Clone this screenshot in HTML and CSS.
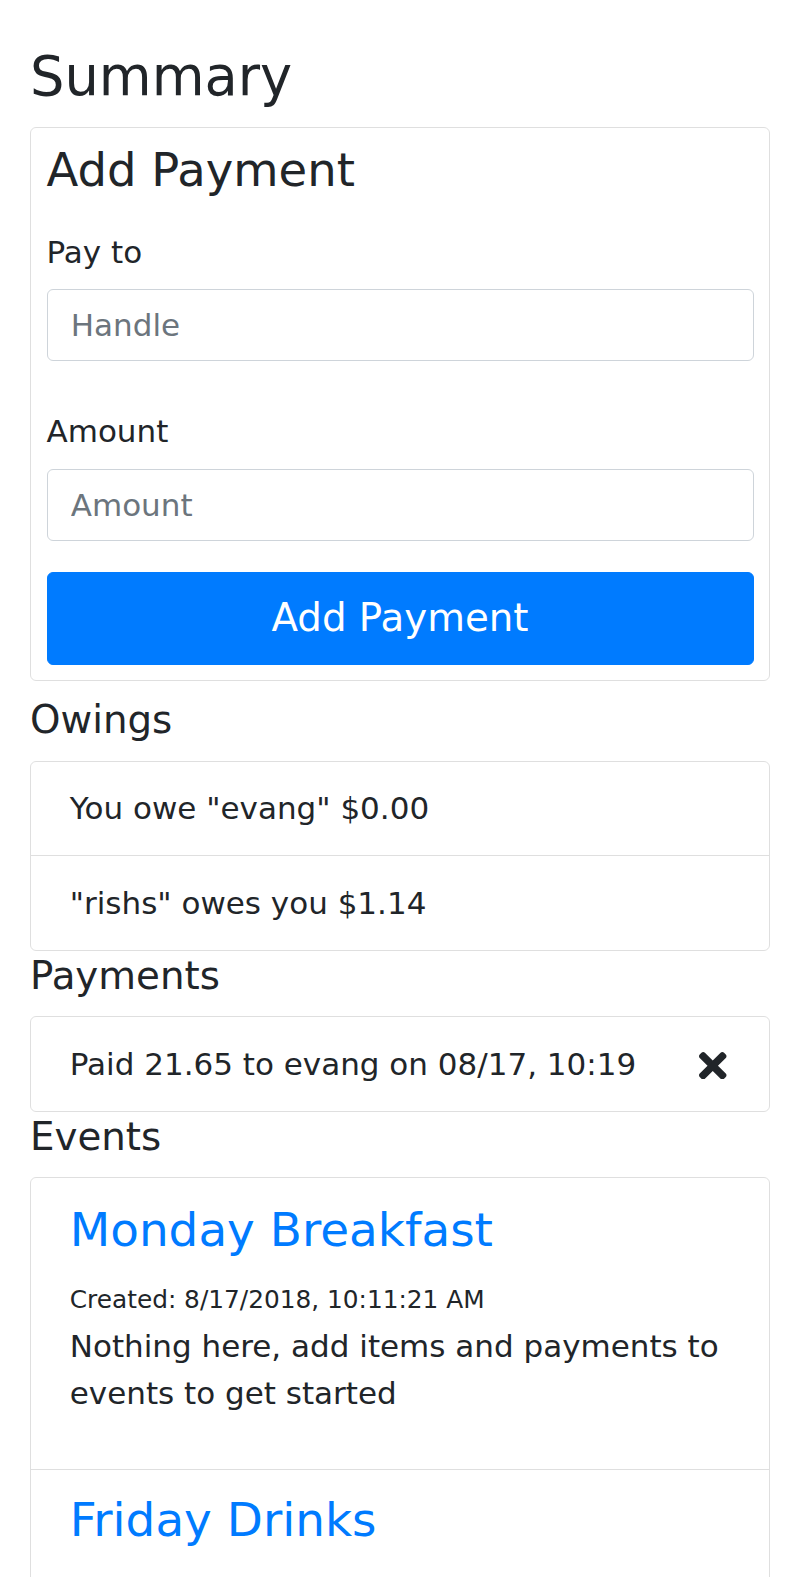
FILE: index.html
```html
<!DOCTYPE html>
<html lang="en">
<head>
<meta charset="utf-8">
<title>Summary</title>
<link rel="stylesheet" href="styles.css">
</head>
<body>
<div class="container">
  <h3 class="page-title">Summary</h3>
  <div class="card">
    <div class="card-body">
      <h4 class="card-title">Add Payment</h4>
      <form class="pay-form">
        <div class="form-group group-first">
          <label class="form-label" for="handle">Pay to</label>
          <input class="form-control" id="handle" type="text" placeholder="Handle">
        </div>
        <div class="form-group group-second">
          <label class="form-label" for="amount">Amount</label>
          <input class="form-control" id="amount" type="text" placeholder="Amount">
        </div>
        <button class="btn-primary" type="button">Add Payment</button>
      </form>
    </div>
  </div>

  <h5 class="section-title">Owings</h5>
  <ul class="list-group">
    <li class="list-group-item">You owe "evang" $0.00</li>
    <li class="list-group-item">"rishs" owes you $1.14</li>
  </ul>

  <h5 class="section-title">Payments</h5>
  <ul class="list-group">
    <li class="list-group-item payment-item">
      <span>Paid 21.65 to evang on 08/17, 10:19</span>
      <svg class="remove-icon" viewBox="0 80 352 352" width="27.5" height="27.5" aria-hidden="true">
        <path fill="#212529" d="M242.72 256l100.07-100.07c12.28-12.28 12.28-32.19 0-44.48l-22.24-22.24c-12.28-12.28-32.19-12.28-44.48 0L176 189.28 75.93 89.21c-12.28-12.28-32.19-12.28-44.48 0L9.21 111.45c-12.28 12.28-12.28 32.19 0 44.48L109.28 256 9.21 356.07c-12.28 12.28-12.28 32.19 0 44.48l22.24 22.24c12.28 12.28 32.2 12.28 44.48 0L176 322.72l100.07 100.07c12.28 12.28 32.2 12.28 44.48 0l22.24-22.24c12.28-12.28 12.28-32.19 0-44.48L242.72 256z"/>
      </svg>
    </li>
  </ul>

  <h5 class="section-title">Events</h5>
  <ul class="list-group events">
    <li class="list-group-item event-item">
      <h4 class="event-title"><a href="#">Monday Breakfast</a></h4>
      <div class="event-meta"><small>Created: 8/17/2018, 10:11:21 AM</small></div>
      <p class="event-text">Nothing here, add items and payments to events to get started</p>
    </li>
    <li class="list-group-item event-item">
      <h4 class="event-title"><a href="#">Friday Drinks</a></h4>
      <div class="event-meta"><small>Created: 8/17/2018, 10:12:04 AM</small></div>
      <p class="event-text">Nothing here, add items and payments to events to get started</p>
    </li>
  </ul>
</div>
</body>
</html>
```

FILE: styles.css
```css
html, body {
  margin: 0;
  padding: 0;
  background: #fff;
}

body {
  font-family: "DejaVu Sans", "Noto Sans", sans-serif;
  font-size: 31px;
  line-height: 46.5px;
  color: #212529;
}

.container {
  padding: 43.7px 30px 0;
}

.page-title {
  font-size: 54.25px;
  font-weight: 400;
  line-height: 65.1px;
  margin: 0 0 18.2px;
}

.card {
  border: 1px solid rgba(0, 0, 0, 0.125);
  border-radius: 6px;
  margin-bottom: 15.6px;
}

.card-body {
  padding: 15.5px;
}

.card-title {
  font-size: 46.5px;
  font-weight: 400;
  line-height: 55.8px;
  margin: 0 0 29.5px;
}

.pay-form {
  margin: 0;
}

.form-label {
  display: block;
  margin-bottom: 14px;
}

.group-first {
  margin-bottom: 47px;
}

.group-second {
  margin-bottom: 31px;
}

.form-control {
  display: block;
  width: 100%;
  box-sizing: border-box;
  height: 72px;
  padding: 11.75px 23.25px;
  font-family: inherit;
  font-size: 31px;
  line-height: 46.5px;
  color: #495057;
  background: #fff;
  border: 1px solid #ced4da;
  border-radius: 6px;
  outline: none;
}

.form-control::placeholder {
  color: #6c757d;
  opacity: 1;
}

.btn-primary {
  display: block;
  width: 100%;
  height: 93px;
  padding: 0;
  font-family: inherit;
  font-size: 38.75px;
  line-height: 58px;
  color: #fff;
  background: #007bff;
  border: 1px solid #007bff;
  border-radius: 6px;
}

.section-title {
  font-size: 38.75px;
  font-weight: 400;
  line-height: 46.5px;
  margin: 2px 0 17.2px;
}

.list-group {
  list-style: none;
  margin: 0;
  padding: 0;
  border: 1px solid rgba(0, 0, 0, 0.125);
  border-radius: 6px;
}

.list-group-item {
  padding: 23.5px 38.75px;
}

.list-group-item + .list-group-item {
  border-top: 1px solid rgba(0, 0, 0, 0.125);
}

.payment-item {
  display: flex;
  align-items: center;
  justify-content: space-between;
}

.remove-icon {
  display: block;
  flex: none;
  margin: 3.2px 3.5px 0 0;
}

.events {
  border-bottom-left-radius: 0;
  border-bottom-right-radius: 0;
}

.event-item + .event-item {
  padding-top: 22px;
}

.event-title {
  font-size: 46.9px;
  font-weight: 400;
  line-height: 55.8px;
  margin: 0 0 16px;
}

.event-title a {
  color: #007bff;
  text-decoration: none;
}

.event-meta small {
  font-size: 24.8px;
}

.event-text {
  margin: 0 0 29.5px;
}
```
